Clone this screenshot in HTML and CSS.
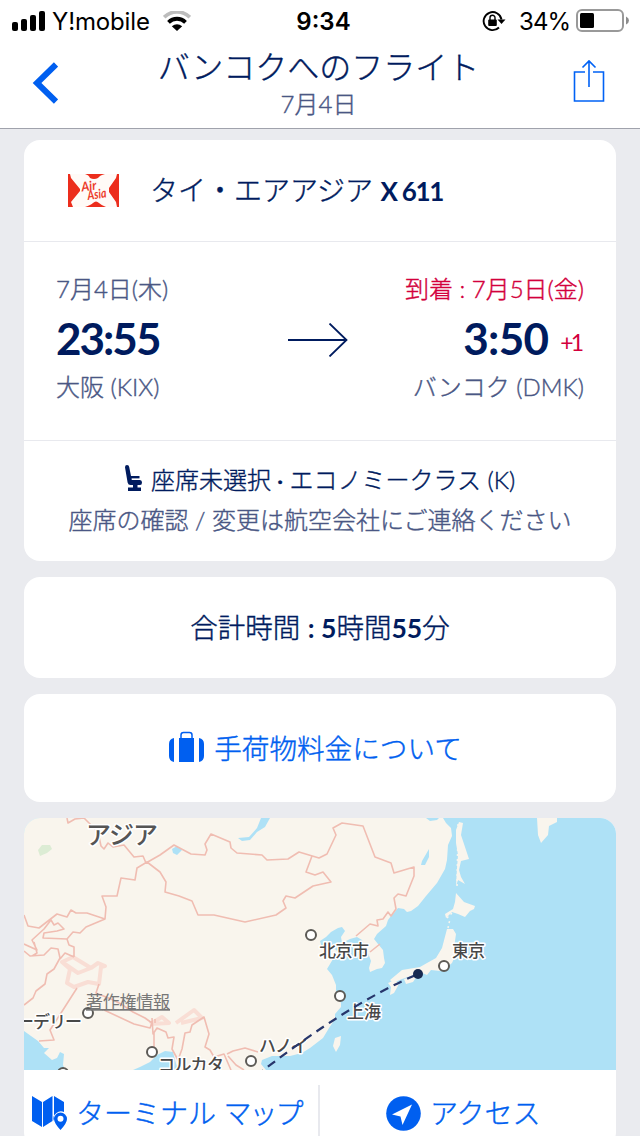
FILE: index.html
```html
<!DOCTYPE html>
<html lang="ja">
<head>
<meta charset="utf-8">
<title>バンコクへのフライト</title>
<link rel="stylesheet" href="styles.css">
</head>
<body>

<div class="status">
  <div class="status-left">
    <svg class="signal" width="34" height="20" viewBox="0 0 34 20">
      <rect x="0" y="11" width="6" height="9" rx="2"/>
      <rect x="9" y="8" width="6" height="12" rx="2"/>
      <rect x="18" y="4" width="6" height="16" rx="2"/>
      <rect x="27" y="0" width="6" height="20" rx="2"/>
    </svg>
    <span class="carrier">Y!mobile</span>
    <svg class="wifi" width="28" height="20" viewBox="0 0 28 20">
      <path d="M1.200 6.200A18 18 0 0 1 26.800 6.200" fill="none" stroke="#bdbdbd" stroke-width="3.600"/>
      <path d="M5.500 11.300A12 12 0 0 1 22.500 11.300" fill="none" stroke="#000" stroke-width="3.800"/>
      <path d="M8.800 15.200Q14 11.200 19.200 15.200L14 20Z"/>
    </svg>
  </div>
  <span class="clock">9:34</span>
  <div class="status-right">
    <svg class="rotation" width="24" height="22" viewBox="0 0 24 22">
      <path d="M17 17.500A9 9 0 1 1 19.500 9.500" fill="none" stroke="#000" stroke-width="1.900"/>
      <path d="M15.500 9.500H23.500L19.500 14Z"/>
      <rect x="6.200" y="9.500" width="8.600" height="6.500" rx="1"/>
      <path d="M8 10V7.800A2.500 2.500 0 0 1 13 7.800V10" fill="none" stroke="#000" stroke-width="1.400"/>
    </svg>
    <span class="percent">34%</span>
    <svg class="battery" width="53" height="24" viewBox="0 0 53 24">
      <rect x="1" y="1" width="46" height="21" rx="5" fill="#fff" stroke="#999" stroke-width="2"/>
      <rect x="4" y="4" width="14" height="15" rx="1.500"/>
      <path d="M50 7.500Q53 9 53 11.500T50 15.500Z" fill="#8c8c8c"/>
    </svg>
  </div>
</div>

<div class="navbar">
  <svg class="back" width="26" height="42" viewBox="0 0 26 42">
    <path d="M24 2.500L5 21L24 39.500" fill="none" stroke="#005ff0" stroke-width="6"/>
  </svg>
  <div class="heading">
    <div class="title">バンコクへのフライト</div>
    <div class="subtitle">7月4日</div>
  </div>
  <svg class="share" width="32" height="44" viewBox="0 0 32 44">
    <path d="M12 13H1.500V42H30.500V13H20M16 28V2M9.500 8.500L16 2L22.500 8.500" fill="none" stroke="#0062f5" stroke-width="1.600"/>
  </svg>
</div>

<div class="content">
  <!-- flight -->
  <div class="card">
    <div class="airline">
      <svg class="logo" width="51" height="33" viewBox="0 0 51 33">
        <rect width="51" height="33" fill="#fffaf7"/>
        <path d="M0 0H2L3 4L12 15V17L3 28L5 33H0ZM51 0H49L48 4L41 14V18L48 28L49 33H51ZM17 0H37Q32 1 30 4Q26 6 22 4Q21 1 17 0ZM17 33Q23 31 25 29Q28 26 31 29Q33 31 38 33Z" fill="#ec2d1c"/>
        <g class="logo-text">
          <text x="14" y="17.500" textLength="15" lengthAdjust="spacingAndGlyphs" transform="rotate(-8 14 17)">Air</text>
          <text x="20" y="26" textLength="19" lengthAdjust="spacingAndGlyphs" transform="rotate(-8 20 26)">Asia</text>
        </g>
      </svg>
      <span class="airline-name">タイ・エアアジア <b>X 611</b></span>
    </div>
    <div class="route">
      <div class="stop">
        <div class="date">7月4日(木)</div>
        <div class="time">23:55</div>
        <div class="city">大阪 (KIX)</div>
      </div>
      <svg class="arrow" width="60" height="34" viewBox="0 0 60 34">
        <path d="M0 17H58.500M41.500 0.500L58.500 17L41.500 33.500" fill="none" stroke="#001b5e" stroke-width="1.800"/>
      </svg>
      <div class="stop stop-end">
        <div class="date red">到着 : 7月5日(金)</div>
        <div class="time time-end">3:50<span class="plus">+1</span></div>
        <div class="city">バンコク (DMK)</div>
      </div>
    </div>
    <div class="seat">
      <div class="seat-class">
        <svg class="seat-icon" width="18" height="27" viewBox="0 0 18 27">
          <path d="M0 2.200Q0 0 2 0T4.200 2L6 11H14.500V13.500H6.500L6.800 15H15Q17 15 17 17.500T15 20H5.500Q3.200 20 2.600 17.500ZM8 19.500H12.500V22.500H16V26H3V22.500H8Z" fill="#001b5e"/>
          <path d="M7 14.200H15" stroke="#fff" stroke-width="0.800"/>
        </svg>
        <span>座席未選択<b> · </b>エコノミークラス (K)</span>
      </div>
      <div class="seat-note">座席の確認 / 変更は航空会社にご連絡ください</div>
    </div>
  </div>

  <div class="card duration"><span>合計時間 <b>: 5</b>時間<b>55</b>分</span></div>

  <div class="card baggage">
    <svg width="36" height="32" viewBox="0 0 36 32">
      <path d="M10 7H25V31H10ZM5 7V31Q0 30 0 25V13Q0 8 5 7ZM30 7Q35 8 35 13V25Q35 30 30 31Z" fill="#005ff0"/>
      <path d="M12 7V4Q12 1.500 14.500 1.500H20.500Q23 1.500 23 4V7" fill="none" stroke="#005ff0" stroke-width="1.500"/>
    </svg>
    <span>手荷物料金について</span>
  </div>

  <!-- map -->
  <div class="card map-card">
    <svg class="map" width="592" height="252" viewBox="24 818 592 252">
      <rect x="24" y="818" width="592" height="252" fill="#aee1f6"/>
      <g class="land">
        <path d="M24 818H443L446 823L451 828L452 836L448 845L447 860L445 869L437 883L426 896L418 906L411 911L407 912L404 909L398 908L393 914L391 916L388 920L386 926L377 934L374 939L378 944L383 950L384 958L385 963L382 968L377 969L370 972L369 968L371 961L368 953L364 945L362 940L357 937L350 939L342 943L341 937L345 931L342 927L338 928L331 932L326 937L320 941L322 948L335 949L339 953L333 959L327 969L332 975L336 985L336 994L341 1003L341 1007L335 1014L335 1019L329 1028L323 1038L310 1048L302 1053L290 1056L272 1056L262 1060L261 1064L266 1070H178L175 1060L173 1052L165 1051L157 1055L150 1062L140 1067L133 1070H65L63 1065L64 1054L60 1052L57 1058L52 1060L44 1053L49 1048L44 1048L38 1041L31 1036L24 1031Z"/>
        <path d="M459 822L463 823L461 835L466 850L469 859L461 861L459 870L461 877L465 884L458 880L456 886L457 868L458 855L456 843L456 830Z"/>
        <path d="M456 893L464 902L475 906L474 909L470 911L465 917L458 914L452 912L446 918L445 914L453 909L455 902Z"/>
        <path d="M447 929L453 929L456 934L454 948L456 954L452 963L446 968L440 971L431 970L427 975L420 972L411 976L402 979L393 983L390 980L402 970L420 967L427 963L436 958L442 948Z"/>
        <path d="M388 983L395 980L399 984L394 993L390 995L391 987ZM404 979L417 976L413 982L406 984ZM537 818H557V822L549 826L548 835L541 843L538 835ZM335 1038L341 1036L340 1045L336 1052L333 1046Z"/>
        <path class="islands" d="M448 928L450 919M447 918L454 911M458 824L457 889"/>
      </g>
      <path d="M238 838L249 837L257 828L261 818H270L265 827L257 832L250 840L242 841ZM172 849L177 846L182 850L177 855L173 853ZM422 861L429 849L429 857L425 865L421 865ZM426 818H439L437 820L430 821Z" fill="#aee1f6"/>
      <path d="M38 850L42 845L50 845L52 849L47 853L40 856Z" fill="#dcecd4"/>
      <g class="border">
        <path class="disputed" d="M62 962L70 969L67 983L74 987L88 982L99 984L101 967L105 966L98 963L91 968L78 973L62 962L73 957L91 968M150 1024L162 1017L169 1023L150 1024M176 1023L194 1010L202 1018L181 1023"/>
        <path d="M67 818L68 823L75 819L84 818L98 832L101 846L104 849L108 843L113 847L124 845L134 857L143 856L146 863L160 855L174 845L191 854L205 855L207 850L205 844L211 834L230 842L231 848L237 853L262 855L267 860L288 859L299 852L319 858L327 854L336 835L333 828L342 823L363 826L375 857L391 863L394 873L414 867L414 876L406 896L398 894L394 898L396 909L391 916L388 912L383 919L377 920L378 926L370 924L356 936"/>
        <path d="M312 856L306 872L315 875L323 872L331 882L313 886L295 898L286 896L283 901L286 908L276 915L245 922L214 915L198 915L192 901L179 896L165 892L166 882L160 872L147 862L137 868L135 880L121 878L117 896L102 896L106 907L105 919L86 927L80 933L73 932L67 939L69 945L74 947L74 957M105 919L87 913L76 913L71 910L67 917L57 914L39 928L28 926L24 915M67 939L43 938L44 933L57 931L64 929L58 923L54 925L51 920L44 929L32 940L37 950L24 944M24 951L30 956L44 955L51 948L58 949L60 958L54 969L47 974L45 984L36 991L33 998L24 1005M34 942L37 953L32 956M74 957L65 953L60 959M77 988L61 1013L50 1030L54 1040L39 1041M99 984L96 993L111 999L121 1004L133 1012L145 1018L152 1023L150 1028L134 1024L104 1010M152 1018L153 1034L157 1028L166 1032L168 1038L174 1037L172 1049L178 1060L182 1049L185 1033L190 1032L192 1025L204 1017L209 1034L205 1047L210 1050L214 1057L224 1054L231 1070M227 1054L233 1051L245 1048L258 1052M228 1056L236 1065L244 1070M155 1019V1023M154 1032V1048M370 952L380 944"/>
      </g>
      <g class="pin">
        <circle cx="311" cy="935" r="5"/>
        <circle cx="444" cy="966" r="5"/>
        <circle cx="340" cy="996" r="5"/>
        <circle cx="88" cy="1013" r="5"/>
        <circle cx="152" cy="1052" r="5"/>
        <circle cx="251" cy="1061" r="5"/>
        <circle cx="63" cy="1073" r="5"/>
      </g>
      <g class="label">
        <text class="region" x="86" y="844" textLength="72">アジア</text>
        <text x="319" y="957" textLength="50">北京市</text>
        <text x="452" y="957" textLength="33">東京</text>
        <text x="347" y="1018" textLength="34">上海</text>
        <text x="17" y="1028" textLength="65">ーデリー</text>
        <text x="158" y="1071" textLength="66">コルカタ</text>
        <text x="259" y="1052" textLength="49">ハノイ</text>
      </g>
      <path class="flight" d="M418 974Q350 1003 261 1072"/>
      <circle cx="418" cy="974" r="5" fill="#172a51"/>
      <text class="legal" x="86" y="1008" textLength="84">著作権情報</text>
    </svg>
    <div class="actions">
      <div class="action">
        <svg width="36" height="36" viewBox="0 0 36 36">
          <path d="M0 1L10 7V32L0 26ZM11 7L20.500 1V26L11 32ZM22 1L32 7V17Q28 15 24.500 18Q20 21 22 26Z" fill="#005ff0"/>
          <path fill-rule="evenodd" d="M28.500 35Q22 28 22 24A6.500 6.500 0 0 1 35 24Q35 28 28.500 35ZM28.500 20.800A3 3 0 1 0 28.500 26.800A3 3 0 1 0 28.500 20.800Z" fill="#005ff0"/>
        </svg>
        <span class="terminal-text">ターミナル <span class="map-word">マップ</span></span>
      </div>
      <div class="action action-access">
        <svg width="35" height="35" viewBox="0 0 35 35">
          <circle cx="17.500" cy="17.500" r="17.300" fill="#005ff0"/>
          <path d="M26 8.500L6 18.500L14.500 20.500L16.500 29Z" fill="#fff"/>
        </svg>
        <span class="access-text">アクセス</span>
      </div>
    </div>
  </div>
</div>

</body>
</html>
```
FILE: styles.css
```css
* { box-sizing: border-box; }

body {
  margin: 0;
  width: 640px;
  height: 1136px;
  overflow: hidden;
  background: #eaebef;
  color: #001b5e;
  font-family: Lato, "Noto Sans CJK JP", sans-serif;
  font-weight: 300;
  -webkit-text-stroke: 0.4px;
}

svg { display: block; flex: none; }
span, .title, .subtitle, .date, .city, .seat-note { white-space: nowrap; }

/* status bar */
.status {
  display: grid;
  grid-template-columns: 1fr auto 1fr;
  height: 40px;
  padding: 0 11px 0 12px;
  align-items: center;
  background: #fff;
  color: #000;
  font: 400 24px/40px Inter, sans-serif;
  -webkit-text-stroke: 0;
}
.status-left, .status-right { display: flex; align-items: center; }
.status-right { justify-content: flex-end; }
.carrier { margin: 2px 0 0 6px; width: 97px; letter-spacing: -0.15px; }
.wifi { margin-left: 14px; }
.clock { font-weight: 600; padding: 2px 0 0 6px; }
.rotation { margin-right: 13px; }
.percent { width: 49px; margin: 2px 8px 0 0; letter-spacing: -0.9px; }

/* navigation */
.navbar {
  display: flex;
  justify-content: space-between;
  height: 89px;
  padding: 0 35px 0 32px;
  background: #fff;
  border-bottom: 1px solid #a0a2ac;
}
.back { margin-top: 22px; }
.share { margin-top: 19px; }
.heading { text-align: center; padding-left: 6px; }
.title { height: 52px; font-size: 32px; line-height: 54px; }
.subtitle { font-size: 24px; line-height: 24px; color: #4a5784; }

.content { padding: 11px 24px 0; }
.card {
  margin-bottom: 16px;
  border-radius: 16px;
  background: #fff;
  overflow: hidden;
}

.airline {
  display: flex;
  align-items: center;
  height: 102px;
  padding-left: 44px;
  border-bottom: 1px solid #e8e9ee;
}
.airline-name { margin: -3px 0 0 31px; font-size: 28px; }
.airline-name b { font-size: 26px; font-weight: 700; letter-spacing: -1.3px; }
.airline-name b, .time, .duration b { -webkit-text-stroke: 0; }
.logo-text { fill: #ec3a2a; font: italic 700 13px Lato, sans-serif; -webkit-text-stroke: 0; }

.route {
  display: flex;
  height: 199px;
  padding: 29px 32px 0;
  border-bottom: 1px solid #e8e9ee;
}
.stop { width: 232px; }
.stop-end { flex: 1; text-align: right; }
.arrow { margin-top: 52px; }
.date, .city { font-size: 24px; line-height: 36px; color: #4a5784; }
.date.red, .plus { color: #d3003c; }
.time { height: 62px; font-size: 44px; line-height: 62px; font-weight: 700; letter-spacing: -2px; }
.time-end { letter-spacing: -0.7px; }
.plus { margin-left: 12px; font-size: 23px; font-weight: 400; vertical-align: 4px; letter-spacing: -3px; padding-right: 3px; }

.seat { height: 120px; padding-top: 19px; text-align: center; font-size: 24px; line-height: 40px; }
.seat-class { display: flex; justify-content: center; align-items: center; gap: 8px; }
.seat-icon { margin-top: -4px; }
.seat-note { color: #4a5784; }

.duration, .baggage { display: flex; align-items: center; justify-content: center; font-size: 28px; padding-bottom: 3px; }
.duration { height: 101px; font-size: 27.5px; }
.duration b { font-size: 26.5px; font-weight: 700; }
.baggage { height: 108px; gap: 9px; padding: 0 9px 2px 0; font-size: 27.600px; color: #005ff0; }

/* map */
.map-card { height: 330px; margin: 0; }
.map { -webkit-text-stroke: 0; }
.land path { fill: #f9f5ed; }
.land .islands { fill: none; stroke: #f9f5ed; stroke-width: 1.5; stroke-dasharray: 2 3; }
.border path { fill: none; stroke: #f0bdb2; stroke-width: 1.6; stroke-linejoin: round; }
.border .disputed { stroke: #f9ded5; stroke-width: 4; }
.flight { fill: none; stroke: #27366b; stroke-width: 2.2; stroke-dasharray: 9 6; stroke-dashoffset: -3; }
.pin circle { fill: #fff; stroke: #5c5a56; stroke-width: 2; }
.label text {
  font: 500 17px "Noto Sans CJK JP", sans-serif;
  fill: #484848;
  stroke: #fff;
  stroke-width: 3px;
  stroke-linejoin: round;
  paint-order: stroke;
}
.label .region { font-size: 25px; font-weight: 500; fill: #555; }
.legal {
  font: 400 17px "Noto Sans CJK JP", sans-serif;
  fill: #777;
  text-decoration: underline;
}

.actions { display: flex; height: 86px; padding-top: 15px; color: #005ff0; font-size: 28px; }
.action { display: flex; width: 297px; height: 56px; align-items: center; padding-left: 8px; border-right: 2px solid #e8e9ee; }
.action-access { padding-left: 66px; border: 0; }
.terminal-text { margin: -2px 0 0 8px; }
.map-word { letter-spacing: -2px; }
.access-text { margin: -2px 0 0 9px; }
```
